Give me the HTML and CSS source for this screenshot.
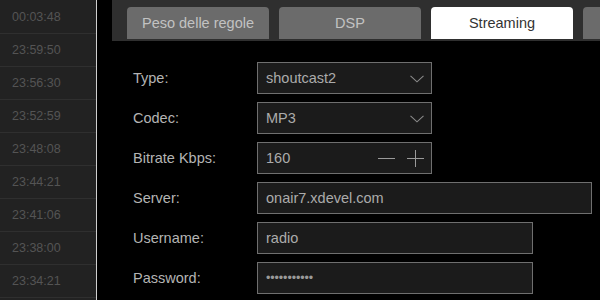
FILE: index.html
```html
<!DOCTYPE html>
<html>
<head>
<meta charset="utf-8">
<link rel="stylesheet" href="styles.css">
</head>
<body>
<div class="app">
  <aside class="sidebar">
    <div class="time">00:03:48</div>
    <div class="time">23:59:50</div>
    <div class="time">23:56:30</div>
    <div class="time">23:52:59</div>
    <div class="time">23:48:08</div>
    <div class="time">23:44:21</div>
    <div class="time">23:41:06</div>
    <div class="time">23:38:00</div>
    <div class="time">23:34:21</div>
  </aside>
  <main class="main">
    <nav class="tabbar">
      <div class="tab">Peso delle regole</div>
      <div class="tab">DSP</div>
      <div class="tab active">Streaming</div>
      <div class="tab"></div>
    </nav>
    <form class="form">
      <div class="row">
        <label class="label">Type:</label>
        <div class="field w-sm">
          <span class="value">shoutcast2</span>
          <svg class="chev" width="14" height="8" viewBox="0 0 14 8"><path d="M0.5 0.8 L7 6.8 L13.5 0.8" fill="none" stroke="#8a8a8a" stroke-width="1.1"/></svg>
        </div>
      </div>
      <div class="row">
        <label class="label">Codec:</label>
        <div class="field w-sm">
          <span class="value">MP3</span>
          <svg class="chev" width="14" height="8" viewBox="0 0 14 8"><path d="M0.5 0.8 L7 6.8 L13.5 0.8" fill="none" stroke="#8a8a8a" stroke-width="1.1"/></svg>
        </div>
      </div>
      <div class="row">
        <label class="label">Bitrate Kbps:</label>
        <div class="field w-sm">
          <span class="value">160</span>
          <svg class="minus" width="17" height="17" viewBox="0 0 17 17"><path d="M0 8.5 H17" stroke="#9a9a9a" stroke-width="1"/></svg>
          <svg class="plus" width="17" height="17" viewBox="0 0 17 17"><path d="M0 8.5 H17 M8.5 0 V17" stroke="#9a9a9a" stroke-width="1"/></svg>
        </div>
      </div>
      <div class="row">
        <label class="label">Server:</label>
        <div class="field w-lg"><span class="value">onair7.xdevel.com</span></div>
      </div>
      <div class="row">
        <label class="label">Username:</label>
        <div class="field w-md"><span class="value">radio</span></div>
      </div>
      <div class="row">
        <label class="label">Password:</label>
        <div class="field w-md"><span class="value dots">•••••••••••</span></div>
      </div>
    </form>
  </main>
</div>
</body>
</html>
```

FILE: styles.css
```css
html, body {
  margin: 0;
  padding: 0;
  background: #000;
  width: 600px;
  height: 300px;
  overflow: hidden;
  font-family: "Liberation Sans", Arial, sans-serif;
}
.app {
  display: flex;
  height: 300px;
}
.sidebar {
  width: 96px;
  flex-shrink: 0;
  background: #222;
  border-right: 1px solid #cfcfcf;
  padding-top: 1px;
  box-sizing: content-box;
}
.time {
  height: 32px;
  border-bottom: 1px solid #2f2f2f;
  display: flex;
  align-items: center;
  padding-left: 12px;
  font-size: 12.5px;
  color: #545454;
}
.main {
  flex: 1;
  margin-left: 15px;
  min-width: 0;
  overflow: hidden;
}
.tabbar {
  display: flex;
  gap: 10px;
  height: 41px;
  box-sizing: border-box;
  padding: 7px 0 0 15px;
  background: #2f2f2f;
  overflow: hidden;
}
.tab {
  flex: 0 0 142px;
  height: 32px;
  border-radius: 4px 4px 0 0;
  background: #6b6b6b;
  color: #c2c2c2;
  font-size: 14.5px;
  display: flex;
  align-items: center;
  justify-content: center;
}
.tab.active {
  background: #fff;
  color: #333;
}
.form {
  display: flex;
  flex-direction: column;
  gap: 8px;
  padding: 21px 0 0 21px;
  margin: 0;
}
.row {
  display: flex;
  align-items: center;
  height: 32px;
}
.label {
  width: 124px;
  flex-shrink: 0;
  color: #b4b4b4;
  font-size: 14.5px;
}
.field {
  height: 32px;
  box-sizing: border-box;
  border: 1px solid #6f6f6f;
  background: #1b1b1b;
  display: flex;
  align-items: center;
  padding: 0 7px 0 8px;
}
.w-sm { width: 175px; }
.w-md { width: 276px; }
.w-lg { width: 335px; }
.value {
  flex: 1;
  color: #ababab;
  font-size: 14.5px;
}
.dots {
  font-size: 12.5px;
  letter-spacing: -0.1px;
  color: #9a9a9a;
}
.chev {
  margin-top: 1px;
}
.minus {
  margin-right: 12px;
}
```
